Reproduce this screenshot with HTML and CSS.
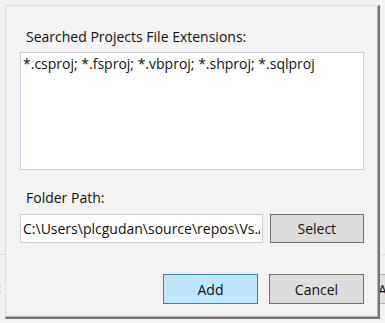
FILE: index.html
```html
<!DOCTYPE html>
<html lang="en">
<head>
  <meta charset="UTF-8" />
  <meta name="viewport" content="width=device-width, initial-scale=1.0" />
  <title>Add Folder</title>
  <link rel="stylesheet" href="styles.css">
</head>
<body>
  <!-- window behind the dialog -->
  <div class="backdrop">
    <div class="back-row">
      <span class="back-colon">:</span>
      <button class="back-button">Add</button>
    </div>
  </div>

  <div class="dialog">
    <label class="field-label" for="extensions">Searched Projects File Extensions:</label>
    <textarea id="extensions" class="extensions">*.csproj; *.fsproj; *.vbproj; *.shproj; *.sqlproj</textarea>

    <label class="field-label folder-label" for="folder">Folder Path:</label>
    <div class="folder-row">
      <input id="folder" class="folder-input" type="text" value="C:\Users\plcgudan\source\repos\Vs.AddFolder">
      <button class="btn">Select</button>
    </div>

    <div class="actions">
      <button class="btn btn-default">Add</button>
      <button class="btn">Cancel</button>
    </div>
  </div>
</body>
</html>
```

FILE: styles.css
```css
body {
  margin: 0;
  width: 385px;
  height: 323px;
  overflow: hidden;
  background: #f2f2f2;
  font-family: 'Open Sans', 'Noto Sans', sans-serif;
  font-size: 14px;
  color: #111;
  position: relative;
}
.backdrop {
  padding-top: 254px;
}
.back-row {
  border-top: 1px solid #dcdcdc;
  height: 60px;
  display: flex;
  justify-content: space-between;
  align-items: flex-start;
}
.back-colon {
  color: #3399ff;
  margin-left: -3px;
  margin-top: 23px;
  font-weight: bold;
}
.back-button {
  margin-top: 19px;
  width: 40px;
  height: 30px;
  margin-right: -32px;
  background: #e1e1e1;
  border: 1px solid #adadad;
  font-family: inherit;
  font-size: 14px;
  color: #111;
  text-align: left;
  padding-left: 0;
}
.dialog {
  position: absolute;
  left: 5px;
  top: 5px;
  width: 375px;
  height: 314px;
  box-sizing: border-box;
  background: #f3f3f3;
  border-top: 1px solid #dadada;
  border-left: 1px solid #dadada;
  border-right: 2px solid #747474;
  border-bottom: 2px solid #747474;
  box-shadow: inset -1px -1px 0 #b4b4b4;
  padding: 21px 14px 0 14px;
  display: flex;
  flex-direction: column;
}
.field-label {
  padding-left: 6px;
  height: 20px;
  line-height: 20px;
  margin-bottom: 5px;
}
.extensions {
  width: 344px;
  height: 118px;
  box-sizing: border-box;
  margin: 0;
  border: 1px solid #c9c9dc;
  background: #fff;
  resize: none;
  font-family: inherit;
  font-size: 14px;
  color: #111;
  padding: 2px 2px;
  line-height: 18px;
  outline: none;
}
.folder-label {
  margin-top: 18px;
  margin-bottom: 6px;
}
.folder-row {
  display: flex;
  gap: 7px;
}
.folder-input {
  width: 244px;
  height: 29px;
  box-sizing: border-box;
  margin: 0;
  border: 1px solid #c9c9dc;
  background: #fff;
  font-family: inherit;
  font-size: 14px;
  color: #111;
  padding: 0 2px;
  outline: none;
}
.btn {
  width: 95px;
  height: 29px;
  box-sizing: border-box;
  margin: 0;
  background: #dddddd;
  border: 1px solid #707070;
  font-family: inherit;
  font-size: 14px;
  color: #111;
  padding: 0;
}
.actions {
  display: flex;
  justify-content: flex-end;
  gap: 11px;
  margin-top: 31px;
}
.actions .btn {
  height: 30px;
}
.btn-default {
  background: #bee6fd;
  border-color: #3c7fb1;
}
```
